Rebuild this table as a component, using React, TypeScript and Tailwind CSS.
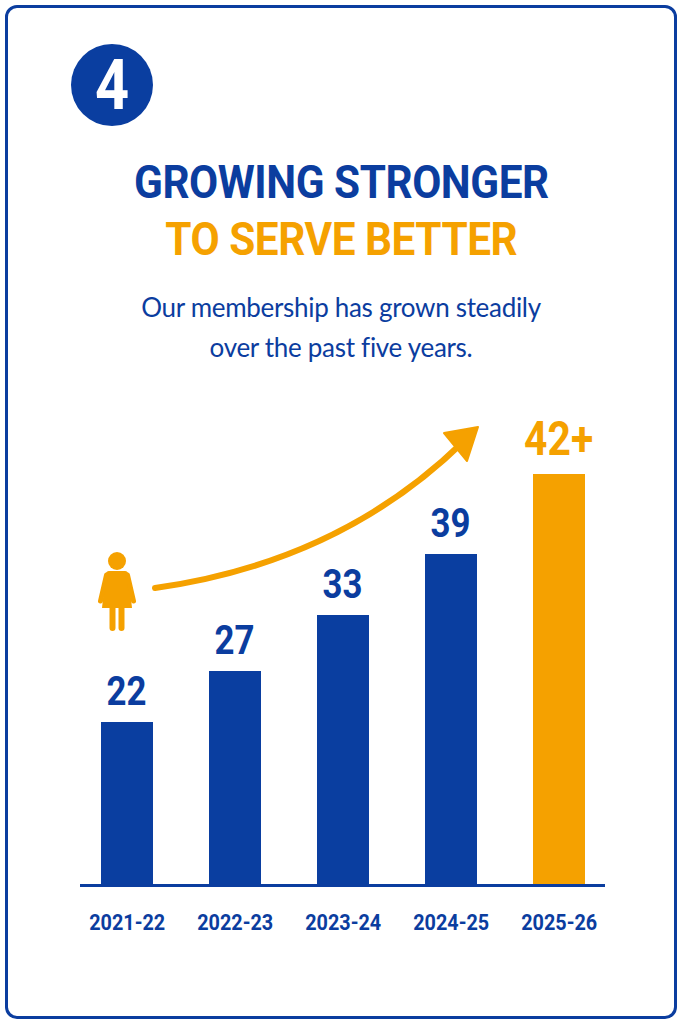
const bars = [
  { value: "22", year: "2021-22", height: 162, accent: false },
  { value: "27", year: "2022-23", height: 213, accent: false },
  { value: "33", year: "2023-24", height: 269, accent: false },
  { value: "39", year: "2024-25", height: 330, accent: false },
  { value: "42+", year: "2025-26", height: 410, accent: true },
];

function Person() {
  return (
    <svg width="60" height="100" viewBox="0 0 60 100" className="absolute left-[17px] top-[142px]">
      <circle cx="27" cy="21" r="9" fill="#f5a100" />
      <path d="M19 31 H35 Q38 31 38.5 35 L42 68 H12 L15.5 35 Q16 31 19 31 Z" fill="#f5a100" />
      <path d="M16.5 35 L10.5 61 M37.5 35 L43.5 61" stroke="#f5a100" strokeWidth="5" strokeLinecap="round" />
      <path d="M22.5 66 V88 M31.5 66 V88" stroke="#f5a100" strokeWidth="6" strokeLinecap="round" />
    </svg>
  );
}

function GrowthArrow() {
  return (
    <svg width="540" height="486" viewBox="0 0 540 486" className="pointer-events-none absolute left-0 top-0">
      <path d="M82 190 Q267 164 390 44" fill="none" stroke="#f5a100" strokeWidth="6" strokeLinecap="round" />
      <polygon points="405,29 371,35 394,63" fill="#f5a100" strokeLinejoin="round" stroke="#f5a100" strokeWidth="2" />
    </svg>
  );
}

export default function App() {
  return (
    <div className="h-[1024px] w-full bg-white p-[5px]" style={{ fontFamily: '"Roboto", sans-serif' }}>
      <div className="flex h-full flex-col rounded-[12px] border-[3px] border-[#0b3d9f]">
        <div className="pl-[63px] pt-[36px]">
          <div className="flex h-[82px] w-[82px] items-center justify-center rounded-full bg-[#0a3ea0] text-white">
            <span className="scale-x-[0.85] text-[70px] font-bold leading-none">4</span>
          </div>
        </div>

        <div className="mt-[33px] flex flex-col items-center text-center font-bold leading-none">
          <h1 className="scale-x-[0.92] text-[46px] tracking-[-0.5px] text-[#0b3d9f]">GROWING STRONGER</h1>
          <h2 className="mt-[11px] scale-x-[0.92] text-[46px] tracking-[-0.5px] text-[#f5a100]">TO SERVE BETTER</h2>
        </div>

        <p
          className="mt-[25px] text-center text-[26px] leading-[40px] tracking-[-0.3px] text-[#0b3d9f]"
          style={{ fontFamily: '"Lato", sans-serif' }}
        >
          Our membership has grown steadily
          <br />
          over the past five years.
        </p>

        <div className="relative ml-[65px] mt-[31px] h-[486px] w-[540px]">
          <div className="flex h-full items-end">
            {bars.map((b) => (
              <div key={b.year} className="flex w-[108px] flex-col items-center">
                <span
                  className={
                    b.accent
                      ? "mb-[11px] scale-x-[0.85] text-[48px] font-bold leading-none text-[#f5a100]"
                      : "mb-[10px] scale-x-[0.85] text-[41px] font-bold leading-none text-[#0b3d9f]"
                  }
                >
                  {b.value}
                </span>
                <div
                  className={b.accent ? "w-[52px] bg-[#f5a100]" : "w-[52px] bg-[#0a3ea0]"}
                  style={{ height: b.height }}
                />
              </div>
            ))}
          </div>
          <GrowthArrow />
          <Person />
        </div>

        <div className="ml-[72px] h-[3px] w-[525px] bg-[#0b3d9f]" />

        <div className="ml-[65px] mt-[25px] flex w-[540px]">
          {bars.map((b) => (
            <div key={b.year} className="flex w-[108px] justify-center">
              <span className="scale-x-90 text-[22px] font-bold leading-none text-[#0b3d9f]">{b.year}</span>
            </div>
          ))}
        </div>
      </div>
    </div>
  );
}
